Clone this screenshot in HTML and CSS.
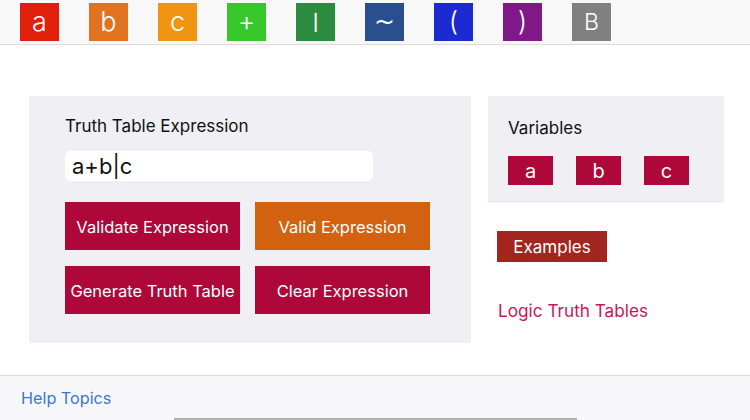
FILE: index.html
```html
<!DOCTYPE html>
<html lang="en">
<head>
  <meta charset="UTF-8" />
  <title>Logic Truth Tables</title>
  <link rel="stylesheet" href="styles.css">
</head>
<body>
  <header class="keybar">
    <button class="key k-a">a</button>
    <button class="key k-b">b</button>
    <button class="key k-c">c</button>
    <button class="key k-or">+</button>
    <button class="key k-and">|</button>
    <button class="key k-not">~</button>
    <button class="key k-open">(</button>
    <button class="key k-close">)</button>
    <button class="key k-back">B</button>
  </header>

  <main class="content">
    <section class="panel expr-panel">
      <div class="panel-title">Truth Table Expression</div>
      <input class="expr-input" type="text" value="a+b|c" />
      <div class="action-grid">
        <button class="action">Validate Expression</button>
        <button class="action valid">Valid Expression</button>
        <button class="action">Generate Truth Table</button>
        <button class="action">Clear Expression</button>
      </div>
    </section>

    <aside class="side">
      <section class="panel var-panel">
        <div class="panel-title">Variables</div>
        <div class="var-row">
          <button class="var">a</button>
          <button class="var">b</button>
          <button class="var">c</button>
        </div>
      </section>
      <button class="examples">Examples</button>
      <a class="app-link" href="#">Logic Truth Tables</a>
    </aside>
  </main>

  <footer class="toolbar">
    <a href="#">Help Topics</a>
    <div class="home-bar"></div>
  </footer>
</body>
</html>
```

FILE: styles.css
```css
html, body { height: 100%; }
body {
  margin: 0;
  width: 750px;
  height: 420px;
  background: white;
  font-family: Inter, "Noto Sans", sans-serif;
  display: flex;
  flex-direction: column;
  overflow: hidden;
}
button { font-family: inherit; border: none; cursor: pointer; padding: 0; }

/* top key bar */
.keybar {
  height: 44px;
  background: #f8f8f8;
  border-bottom: 1px solid #dcdcdc;
  display: flex;
  align-items: center;
  gap: 30px;
  padding-left: 20px;
  flex-shrink: 0;
}
.key {
  width: 39px; height: 38px;
  color: white;
  font-size: 27px;
  font-weight: 300;
  line-height: 38px;
  text-align: center;
}
.k-a { background: #e0200d; }
.k-b { background: #e07220; }
.k-c { background: #f09512; }
.k-or { background: #36c82a; }
.k-and { background: #2b8b3e; font-size: 16px; font-weight: 600; }
.k-not { background: #2a4f8e; font-family: "DejaVu Sans", sans-serif; font-size: 25px; font-weight: 400; }
.k-open { background: #1c2ad2; }
.k-close { background: #801988; }
.k-back { background: #808080; font-size: 23px; }

/* main */
.content {
  flex: 1;
  display: flex;
  align-items: flex-start;
  gap: 17px;
  padding: 51px 0 0 29px;
}
.panel { background: #efeff4; }
.panel-title { font-size: 17px; color: #111; }

.expr-panel {
  width: 442px;
  height: 247px;
  box-sizing: border-box;
  padding: 20px 0 0 36px;
}
.expr-input {
  display: block;
  box-sizing: border-box;
  width: 308px; height: 30px;
  margin: 15px 0 21px 0;
  border: none;
  border-radius: 5px;
  background: white;
  padding: 0 7px;
  font-family: inherit;
  font-size: 22px;
  color: #111;
}
.action-grid {
  display: grid;
  grid-template-columns: 175px 175px;
  grid-auto-rows: 48px;
  column-gap: 15px;
  row-gap: 16px;
}
.action {
  background: #ae073a;
  color: white;
  font-size: 16.5px;
  padding-top: 2px;
}
.action.valid { background: #d2620f; }

.side {
  width: 236px;
  display: flex;
  flex-direction: column;
  align-items: flex-start;
}
.var-panel {
  width: 236px; height: 107px;
  box-sizing: border-box;
  padding: 22px 0 0 20px;
}
.var-row { display: flex; gap: 23px; margin-top: 18px; }
.var {
  width: 45px; height: 29px;
  background: #ae073a;
  color: white;
  font-size: 20px;
}
.examples {
  margin: 28px 0 0 9px;
  width: 110px; height: 31px;
  background: #a2251f;
  color: white;
  font-size: 17px;
}
.app-link {
  margin: 38px 0 0 10px;
  color: #c8175a;
  font-size: 17.2px;
  text-decoration: none;
}

/* bottom toolbar */
.toolbar {
  height: 44px;
  flex-shrink: 0;
  background: #f7f7f9;
  border-top: 1px solid #dcdcdc;
  padding-left: 21px;
  position: relative;
  display: flex;
  align-items: center;
}
.toolbar a {
  color: #3a78d0;
  font-size: 16.2px;
  text-decoration: none;
  margin-top: -1px;
}
.home-bar {
  position: absolute;
  left: 174px; bottom: 0;
  width: 403px; height: 2px;
  background: #b0b0b0;
}
```
